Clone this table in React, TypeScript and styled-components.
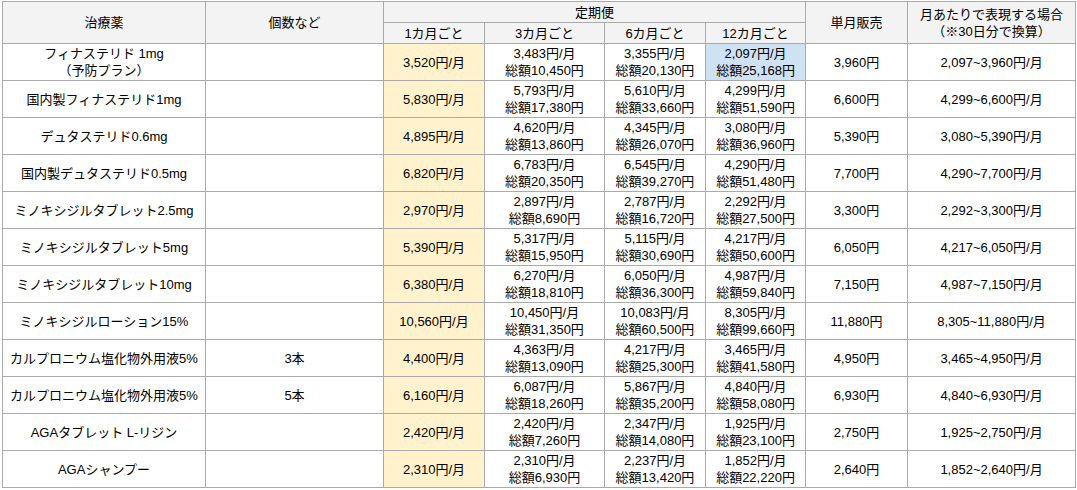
import React from "react";
import styled, { createGlobalStyle } from "styled-components";

const GlobalStyle = createGlobalStyle`
    html, body {
        margin: 0;
        padding: 0;
        background: #fff;
    }
    body {
        font-family: "Liberation Sans", Arial, "Noto Sans CJK JP", sans-serif;
        color: #000;
    }
`;

const Page = styled.div`
    padding: 1px 0 0 2px;
`;

const Table = styled.table`
    border-collapse: collapse;
    table-layout: fixed;
    width: 1073px;
    font-size: 13px;
    line-height: 17px;
`;

const HeadRow = styled.tr`
    height: 21px;
`;

const BodyRow = styled.tr`
    height: 37px;
`;

const HeadCell = styled.th`
    border: 1px solid #aaaaaa;
    background-color: #f3f3f3;
    font-weight: normal;
    text-align: center;
    vertical-align: middle;
    padding: 0 2px;
    white-space: nowrap;
`;

type Tone = "plain" | "yellow" | "blue";

const toneColor: Record<Tone, string> = {
    plain: "#ffffff",
    yellow: "#fff2cc",
    blue: "#cfe2f3",
};

const Cell = styled.td<{ $tone?: Tone }>`
    border: 1px solid #aaaaaa;
    background-color: ${(props) => toneColor[props.$tone || "plain"]};
    text-align: center;
    vertical-align: middle;
    padding: 0 2px;
    white-space: nowrap;
`;

const Line = styled.div`
    display: block;
`;

interface Plan {
    perMonth: string;
    total: string;
}

interface Row {
    name: string[];
    count: string;
    monthly1: string;
    m3: Plan;
    m6: Plan;
    m12: Plan;
    single: string;
    range: string;
    highlight12?: boolean;
}

const rows: Row[] = [
    {
        name: ["フィナステリド 1mg", "（予防プラン）"],
        count: "",
        monthly1: "3,520円/月",
        m3: { perMonth: "3,483円/月", total: "総額10,450円" },
        m6: { perMonth: "3,355円/月", total: "総額20,130円" },
        m12: { perMonth: "2,097円/月", total: "総額25,168円" },
        single: "3,960円",
        range: "2,097~3,960円/月",
        highlight12: true,
    },
    {
        name: ["国内製フィナステリド1mg"],
        count: "",
        monthly1: "5,830円/月",
        m3: { perMonth: "5,793円/月", total: "総額17,380円" },
        m6: { perMonth: "5,610円/月", total: "総額33,660円" },
        m12: { perMonth: "4,299円/月", total: "総額51,590円" },
        single: "6,600円",
        range: "4,299~6,600円/月",
    },
    {
        name: ["デュタステリド0.6mg"],
        count: "",
        monthly1: "4,895円/月",
        m3: { perMonth: "4,620円/月", total: "総額13,860円" },
        m6: { perMonth: "4,345円/月", total: "総額26,070円" },
        m12: { perMonth: "3,080円/月", total: "総額36,960円" },
        single: "5,390円",
        range: "3,080~5,390円/月",
    },
    {
        name: ["国内製デュタステリド0.5mg"],
        count: "",
        monthly1: "6,820円/月",
        m3: { perMonth: "6,783円/月", total: "総額20,350円" },
        m6: { perMonth: "6,545円/月", total: "総額39,270円" },
        m12: { perMonth: "4,290円/月", total: "総額51,480円" },
        single: "7,700円",
        range: "4,290~7,700円/月",
    },
    {
        name: ["ミノキシジルタブレット2.5mg"],
        count: "",
        monthly1: "2,970円/月",
        m3: { perMonth: "2,897円/月", total: "総額8,690円" },
        m6: { perMonth: "2,787円/月", total: "総額16,720円" },
        m12: { perMonth: "2,292円/月", total: "総額27,500円" },
        single: "3,300円",
        range: "2,292~3,300円/月",
    },
    {
        name: ["ミノキシジルタブレット5mg"],
        count: "",
        monthly1: "5,390円/月",
        m3: { perMonth: "5,317円/月", total: "総額15,950円" },
        m6: { perMonth: "5,115円/月", total: "総額30,690円" },
        m12: { perMonth: "4,217円/月", total: "総額50,600円" },
        single: "6,050円",
        range: "4,217~6,050円/月",
    },
    {
        name: ["ミノキシジルタブレット10mg"],
        count: "",
        monthly1: "6,380円/月",
        m3: { perMonth: "6,270円/月", total: "総額18,810円" },
        m6: { perMonth: "6,050円/月", total: "総額36,300円" },
        m12: { perMonth: "4,987円/月", total: "総額59,840円" },
        single: "7,150円",
        range: "4,987~7,150円/月",
    },
    {
        name: ["ミノキシジルローション15%"],
        count: "",
        monthly1: "10,560円/月",
        m3: { perMonth: "10,450円/月", total: "総額31,350円" },
        m6: { perMonth: "10,083円/月", total: "総額60,500円" },
        m12: { perMonth: "8,305円/月", total: "総額99,660円" },
        single: "11,880円",
        range: "8,305~11,880円/月",
    },
    {
        name: ["カルプロニウム塩化物外用液5%"],
        count: "3本",
        monthly1: "4,400円/月",
        m3: { perMonth: "4,363円/月", total: "総額13,090円" },
        m6: { perMonth: "4,217円/月", total: "総額25,300円" },
        m12: { perMonth: "3,465円/月", total: "総額41,580円" },
        single: "4,950円",
        range: "3,465~4,950円/月",
    },
    {
        name: ["カルプロニウム塩化物外用液5%"],
        count: "5本",
        monthly1: "6,160円/月",
        m3: { perMonth: "6,087円/月", total: "総額18,260円" },
        m6: { perMonth: "5,867円/月", total: "総額35,200円" },
        m12: { perMonth: "4,840円/月", total: "総額58,080円" },
        single: "6,930円",
        range: "4,840~6,930円/月",
    },
    {
        name: ["AGAタブレット L-リジン"],
        count: "",
        monthly1: "2,420円/月",
        m3: { perMonth: "2,420円/月", total: "総額7,260円" },
        m6: { perMonth: "2,347円/月", total: "総額14,080円" },
        m12: { perMonth: "1,925円/月", total: "総額23,100円" },
        single: "2,750円",
        range: "1,925~2,750円/月",
    },
    {
        name: ["AGAシャンプー"],
        count: "",
        monthly1: "2,310円/月",
        m3: { perMonth: "2,310円/月", total: "総額6,930円" },
        m6: { perMonth: "2,237円/月", total: "総額13,420円" },
        m12: { perMonth: "1,852円/月", total: "総額22,220円" },
        single: "2,640円",
        range: "1,852~2,640円/月",
    },
];

const colWidths = [203, 178, 101, 120, 101, 100, 102, 168];

const PlanCell: React.FC<{ plan: Plan; tone?: Tone }> = ({ plan, tone }) => (
    <Cell $tone={tone}>
        <Line>{plan.perMonth}</Line>
        <Line>{plan.total}</Line>
    </Cell>
);

const App: React.FC = () => {
    return (
        <Page>
            <GlobalStyle />
            <Table>
                <colgroup>
                    {colWidths.map((w, i) => (
                        <col key={i} style={{ width: `${w}px` }} />
                    ))}
                </colgroup>
                <thead>
                    <HeadRow>
                        <HeadCell rowSpan={2}>治療薬</HeadCell>
                        <HeadCell rowSpan={2}>個数など</HeadCell>
                        <HeadCell colSpan={4}>定期便</HeadCell>
                        <HeadCell rowSpan={2}>単月販売</HeadCell>
                        <HeadCell rowSpan={2}>
                            <Line>月あたりで表現する場合</Line>
                            <Line>（※30日分で換算）</Line>
                        </HeadCell>
                    </HeadRow>
                    <HeadRow>
                        <HeadCell>1カ月ごと</HeadCell>
                        <HeadCell>3カ月ごと</HeadCell>
                        <HeadCell>6カ月ごと</HeadCell>
                        <HeadCell>12カ月ごと</HeadCell>
                    </HeadRow>
                </thead>
                <tbody>
                    {rows.map((row, i) => (
                        <BodyRow key={i}>
                            <Cell>
                                {row.name.map((n, j) => (
                                    <Line key={j}>{n}</Line>
                                ))}
                            </Cell>
                            <Cell>{row.count}</Cell>
                            <Cell $tone="yellow">{row.monthly1}</Cell>
                            <PlanCell plan={row.m3} />
                            <PlanCell plan={row.m6} />
                            <PlanCell plan={row.m12} tone={row.highlight12 ? "blue" : "plain"} />
                            <Cell>{row.single}</Cell>
                            <Cell>{row.range}</Cell>
                        </BodyRow>
                    ))}
                </tbody>
            </Table>
        </Page>
    );
};

export default App;
